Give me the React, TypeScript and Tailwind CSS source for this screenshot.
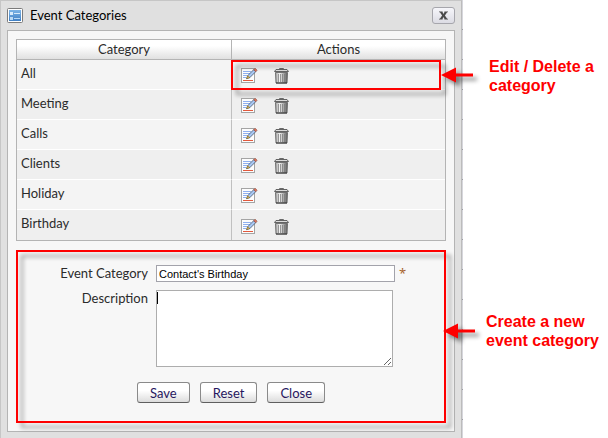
import React from "react";

const categories = ["All", "Meeting", "Calls", "Clients", "Holiday", "Birthday"];

function FormIcon() {
  return (
    <svg width="16" height="15" viewBox="0 0 16 15" aria-hidden="true">
      <defs>
        <linearGradient id="formIconFill" x1="0" y1="0" x2="0" y2="1">
          <stop offset="0" stopColor="#7db4e6" />
          <stop offset="1" stopColor="#3f7fc4" />
        </linearGradient>
      </defs>
      <rect x="0.5" y="0.5" width="15" height="14" rx="1" fill="#fff" stroke="#7b7b7b" />
      <rect x="2" y="2" width="12" height="11" fill="url(#formIconFill)" />
      <rect x="3" y="4" width="3" height="3" fill="#d8ebfb" />
      <rect x="3" y="9" width="3" height="3" fill="#b8d8f4" />
      <rect x="7" y="5" width="6" height="1" fill="#d8ebfb" />
      <rect x="7" y="10" width="6" height="1" fill="#b8d8f4" />
    </svg>
  );
}

function EditIcon() {
  return (
    <svg width="17" height="17" viewBox="0 0 17 17" aria-hidden="true">
      <rect x="0.5" y="1.5" width="13" height="14" fill="#fdfdfd" stroke="#a4a4a4" />
      <path d="M2 4.5h8M2 6.5h7M2 8.5h4M2 10.5h3" stroke="#8fb0f0" />
      <path d="M2 13.5h10" stroke="#e2583c" />
      <path d="M5.6 11.6L6.8 8.6L12.8 2.6L14.8 4.6L8.8 10.6Z" fill="#a9c8f5" stroke="#43546c" strokeWidth="0.8" />
      <path d="M5.6 11.6L6.8 8.6L8.8 10.6Z" fill="#f0c555" stroke="#6b5520" strokeWidth="0.5" />
      <path d="M12.6 2.8L14.2 1.2L16.2 3.2L14.6 4.8Z" fill="#d9745c" stroke="#874638" strokeWidth="0.5" />
    </svg>
  );
}

function TrashIcon() {
  return (
    <svg width="15" height="17" viewBox="0 0 15 17" aria-hidden="true">
      <defs>
        <linearGradient id="binFill" x1="0" y1="0" x2="1" y2="0">
          <stop offset="0" stopColor="#a0a0a0" />
          <stop offset="0.35" stopColor="#f4f4f4" />
          <stop offset="1" stopColor="#5d5d5d" />
        </linearGradient>
      </defs>
      <path d="M5.5 2.5V1.5h4v1" fill="none" stroke="#6a6a6a" />
      <path d="M1.5 5.5h12l-0.5 10.5h-11z" fill="url(#binFill)" stroke="#666" strokeWidth="0.9" />
      <path d="M4.5 7v8M6.5 7v8M8.5 7v8M10.5 7v8" stroke="#777" strokeWidth="0.7" />
      <path d="M0.5 4.5L2 2.5H13L14.5 4.5Z" fill="#dcdcdc" stroke="#555" strokeWidth="0.9" />
      <path d="M2 16h11" stroke="#333" />
    </svg>
  );
}

function Arrow() {
  return (
    <svg
      width="34"
      height="16"
      viewBox="0 0 34 16"
      aria-hidden="true"
      className="drop-shadow-[4px_4px_2px_rgba(0,0,0,0.45)]"
    >
      <path d="M0 8L15 0.5V6.5H32V9.5H15V15.5Z" fill="#fe0000" />
    </svg>
  );
}

function Highlight({ className }: { className: string }) {
  return (
    <div
      aria-hidden="true"
      className={`pointer-events-none absolute border-2 border-[#fe0000] drop-shadow-[5px_5px_2px_rgba(0,0,0,0.4)] ${className}`}
    />
  );
}

function PushButton({ children, type }: { children: string; type: "submit" | "reset" | "button" }) {
  return (
    <button
      type={type}
      className="h-[21px] rounded-[3px] border border-[#8a8a8a] border-b-[#5f5f5f] bg-linear-to-b from-white from-40% to-[#dcdcdc] px-3 text-[13px] leading-[18px] text-[#27175e]"
    >
      {children}
    </button>
  );
}

export default function App() {
  return (
    <div className="flex items-stretch bg-white font-['Lato','Noto_Sans',sans-serif] text-[13px] text-[#2b2b2b]">
      <section
        aria-labelledby="dialog-title"
        className="min-w-0 flex-1 border-x border-t border-[#c6c6c6] border-r-[#bcbcbc] bg-[#e0e0e0] px-1.5 pb-[7px]"
      >
        <header className="flex h-[29px] items-center justify-between">
          <div className="flex items-center gap-[7px]">
            <FormIcon />
            <h1 id="dialog-title" className="pb-0.5 text-[13px] leading-4 text-black">
              Event Categories
            </h1>
          </div>
          <button
            type="button"
            aria-label="Close dialog"
            className="flex h-[17px] w-[23px] items-center justify-center rounded-[3px] border border-[#a6a6ac] bg-linear-to-b from-[#f6f6fa] to-[#dcdce4]"
          >
            <svg width="9" height="9" viewBox="0 0 10 10" aria-hidden="true">
              <path d="M0 0.5H4V1.5L5 3.2L6 1.5V.5H10V1.5H9L6.6 5L9 8.5H10V9.5H6V8.5L5 6.8L4 8.5V9.5H0V8.5H1L3.4 5L1 1.5H0Z" fill="#4a4a4a" />
            </svg>
          </button>
        </header>

        <div className="border border-[#b4b4b4] bg-[#f7f7f7] p-2">
          <table className="w-full table-fixed border-separate border-spacing-0 border border-[#b4b4b4]">
            <thead>
              <tr className="h-5 bg-linear-to-b from-white from-30% to-[#dedede]">
                <th scope="col" className="border-b border-[#b4b4b4] p-0 font-normal leading-[19px]">
                  Category
                </th>
                <th scope="col" className="border-b border-l border-[#b4b4b4] p-0 font-normal leading-[19px]">
                  Actions
                </th>
              </tr>
            </thead>
            <tbody>
              {categories.map((name, i) => (
                <tr key={name} className="h-[30px] odd:bg-[#f4f4f4] even:bg-[#efefef]">
                  <td className={`p-0 pl-1 pb-0.5 ${i < categories.length - 1 ? "border-b border-white" : ""}`}>{name}</td>
                  <td
                    className={`relative border-l border-l-[#c0c0c0] p-0 pl-[9px] pt-0.5 ${
                      i < categories.length - 1 ? "border-b border-b-white" : ""
                    }`}
                  >
                    <div className="flex items-center gap-4">
                      <button type="button" aria-label={`Edit ${name}`}>
                        <EditIcon />
                      </button>
                      <button type="button" aria-label={`Delete ${name}`}>
                        <TrashIcon />
                      </button>
                    </div>
                    {i === 0 && <Highlight className="-left-px right-1 top-0 -bottom-px" />}
                  </td>
                </tr>
              ))}
            </tbody>
          </table>

          <form className="relative mt-[9px] px-2 pb-5 pt-[15px]" onSubmit={(e) => e.preventDefault()}>
            <div className="flex gap-2">
              <label htmlFor="category" className="w-[124px] text-right leading-4">
                Event Category
              </label>
              <div className="flex min-w-0 flex-1 gap-1 pr-[31px]">
                <input
                  id="category"
                  type="text"
                  required
                  defaultValue="Contact's Birthday"
                  className="h-[17px] min-w-0 flex-1 border border-[#a3a3ab] bg-white px-0.5 font-['Liberation_Sans',Arial,sans-serif] text-[11px] leading-[15px] text-black outline-none"
                />
                <span aria-hidden="true" className="w-2 font-['Noto_Sans',sans-serif] leading-4 text-[#a8642e]">
                  *
                </span>
              </div>
            </div>
            <div className="mt-2 flex gap-2">
              <label htmlFor="description" className="w-[124px] text-right leading-4">
                Description
              </label>
              <div className="relative min-w-0 flex-1 pr-[45px]">
                <textarea
                  id="description"
                  className="block h-[77px] w-full resize border border-[#adadad] bg-white px-0.5 text-[12px] text-black outline-none"
                />
                <span aria-hidden="true" className="absolute left-px top-0.5 h-3 w-px bg-black" />
              </div>
            </div>
            <div className="mt-[15px] flex justify-center gap-2.5">
              <PushButton type="submit">Save</PushButton>
              <PushButton type="reset">Reset</PushButton>
              <PushButton type="button">Close</PushButton>
            </div>
            <Highlight className="inset-0" />
          </form>
        </div>
      </section>
      <div
        aria-hidden="true"
        className="w-px bg-[repeating-linear-gradient(to_bottom,#d6d6dc_0px,#d6d6dc_29px,#9a9aa2_29px,#9a9aa2_30px)]"
      />

      <aside className="relative w-[145px] shrink-0 font-['Liberation_Sans',Arial,sans-serif] text-[16px] font-bold leading-[19px] text-[#fe0000]">
        <p className="pl-[26px] pt-[57px]">
          Edit / Delete a<br />
          category
        </p>
        <p className="pl-[23px] pt-[217px]">
          Create a new
          <br />
          event category
        </p>
        <div className="absolute -left-[22px] top-[67px]">
          <Arrow />
        </div>
        <div className="absolute -left-[20px] top-[323px]">
          <Arrow />
        </div>
      </aside>
    </div>
  );
}
